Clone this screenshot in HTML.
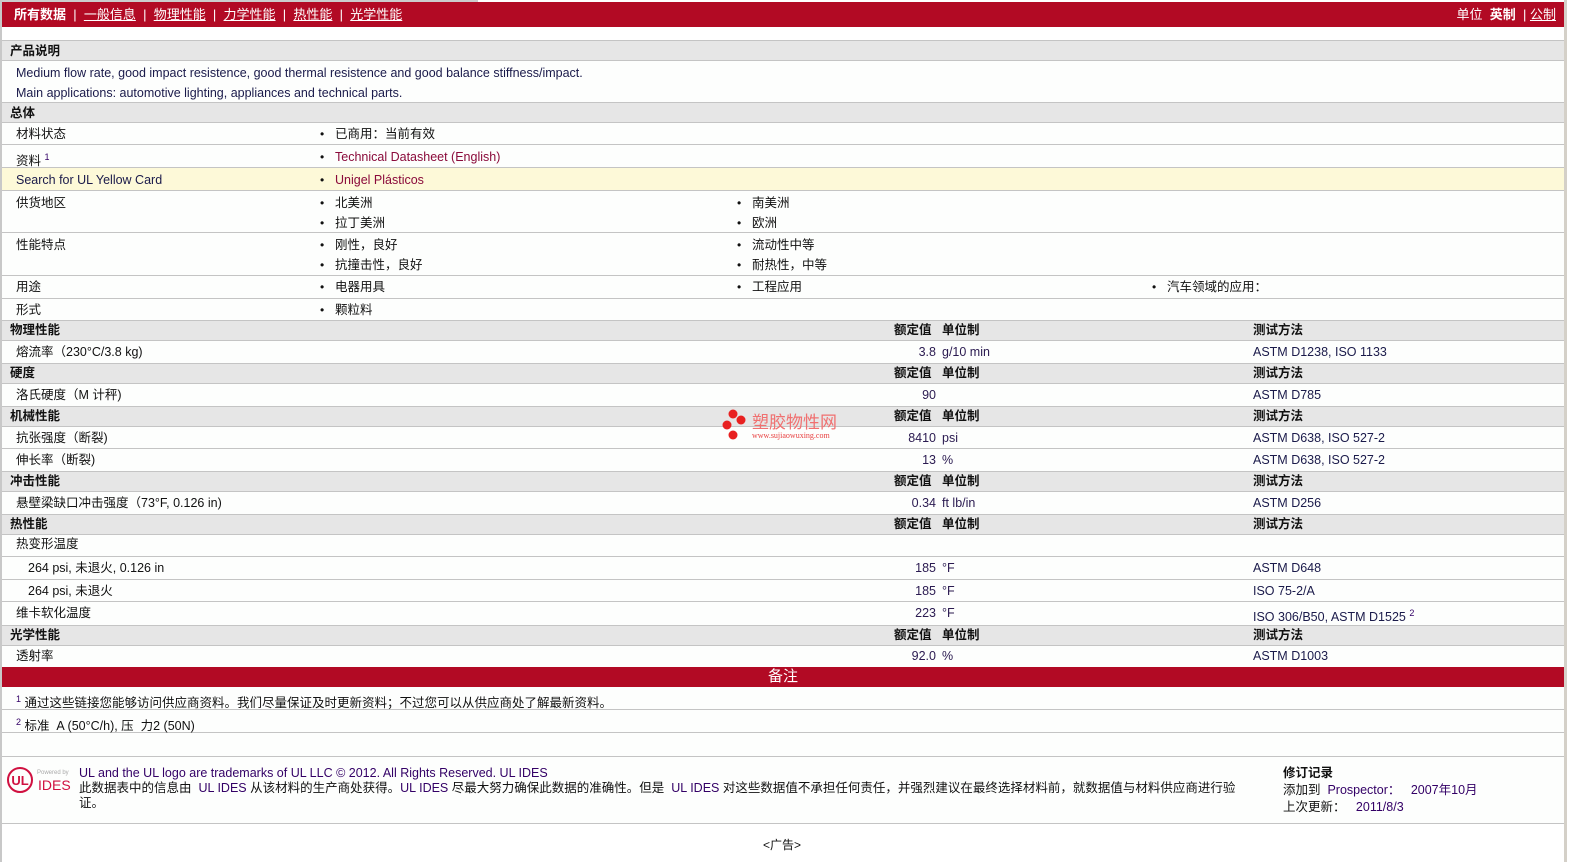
<!DOCTYPE html>
<html><head><meta charset="utf-8"><style>
*{margin:0;padding:0;box-sizing:border-box}
body{width:1586px;height:862px;background:#fff;font-family:"Liberation Sans","Noto Sans CJK SC",sans-serif;font-size:12.5px;color:#111;position:relative;overflow:hidden}
.r{position:absolute;left:2px;width:1562px;border-bottom:1px solid #c4c4c4;background:#fdfefd}
.s{background:#e6e6e6;font-weight:bold;border-top:1px solid #c4c4c4}
.r span{position:absolute;white-space:nowrap}
.l{left:14px}.sl{left:8px}
.b1{left:318px}.b2{left:735px}.b3{left:1150px}
.b1:before,.b2:before,.b3:before{content:"•";position:absolute;left:0;font-size:12px}
.b1 i,.b2 i,.b3 i{font-style:normal;padding-left:15px}
.v{right:628px;text-align:right;color:#2a1a50}
.u{left:940px;color:#2a1a50}
.h1{left:892px}.h2{left:940px}
.m{left:1251px;color:#1a1a4a}
.lk{color:#8a0a3a}
sup{font-size:9px;color:#330066}
#side{position:absolute;left:1564px;top:0;width:3px;height:862px;background:#d4d0c8}
</style></head><body>
<div style="position:absolute;left:2px;top:2px;width:1562px;height:25px;background:#b20a24;color:#fff;font-size:13px;line-height:25px">
<span style="position:absolute;left:12px"><b>所有数据</b> &nbsp;| &nbsp;<u>一般信息</u> &nbsp;| &nbsp;<u>物理性能</u> &nbsp;| &nbsp;<u>力学性能</u> &nbsp;| &nbsp;<u>热性能</u> &nbsp;| &nbsp;<u>光学性能</u></span>
<span style="position:absolute;right:8px">单位 &nbsp;<b>英制</b> &nbsp;| <u>公制</u></span></div>
<div style="position:absolute;left:2px;top:0;width:476px;height:2px;background:#ccc"></div>

<div class="r s" style="top:40px;height:21px;line-height:20px"><span class="sl">产品说明</span></div>
<div class="r" style="top:61px;height:41px;border:none"><span class="l" style="top:2px;line-height:20px;color:#1a1a4a">Medium flow rate, good impact resistence, good thermal resistence and good balance stiffness/impact.<br>Main applications: automotive lighting, appliances and technical parts.</span></div>
<div class="r s" style="top:102px;height:21px;line-height:20px"><span class="sl">总体</span></div>
<div class="r" style="top:123px;height:22px;line-height:22px"><span class="l">材料状态</span><span class="b1"><i>已商用：当前有效</i></span></div>
<div class="r" style="top:145px;height:23px;line-height:24px"><span class="l">资料 <sup>1</sup></span><span class="b1"><i class="lk">Technical Datasheet (English)</i></span></div>
<div class="r" style="top:168px;height:23px;line-height:24px;background:#fdf9d8"><span class="l" style="color:#1a1a4a">Search for UL Yellow Card</span><span class="b1"><i class="lk">Unigel Plásticos</i></span></div>
<div class="r" style="top:191px;height:42px;line-height:20px"><span class="l" style="top:2px">供货地区</span><span class="b1" style="top:2px"><i>北美洲</i></span><span class="b1" style="top:22px"><i>拉丁美洲</i></span><span class="b2" style="top:2px"><i>南美洲</i></span><span class="b2" style="top:22px"><i>欧洲</i></span></div>
<div class="r" style="top:233px;height:43px;line-height:20px"><span class="l" style="top:2px">性能特点</span><span class="b1" style="top:2px"><i>刚性，良好</i></span><span class="b1" style="top:22px"><i>抗撞击性，良好</i></span><span class="b2" style="top:2px"><i>流动性中等</i></span><span class="b2" style="top:22px"><i>耐热性，中等</i></span></div>
<div class="r" style="top:276px;height:23px;line-height:22px"><span class="l">用途</span><span class="b1"><i>电器用具</i></span><span class="b2"><i>工程应用</i></span><span class="b3"><i>汽车领域的应用：</i></span></div>
<div class="r" style="top:299px;height:22px;line-height:22px;border:none"><span class="l">形式</span><span class="b1"><i>颗粒料</i></span></div>

<div class="r s" style="top:320px;height:21px;line-height:19px"><span class="sl">物理性能</span><span class="h1">额定值</span><span class="h2">单位制</span><span class="m" style="color:#111">测试方法</span></div>
<div class="r" style="top:341px;height:22px;line-height:23px;border:none"><span class="l">熔流率（230°C/3.8 kg)</span><span class="v">3.8</span><span class="u">g/10 min</span><span class="m">ASTM D1238, ISO 1133</span></div>
<div class="r s" style="top:363px;height:21px;line-height:19px"><span class="sl">硬度</span><span class="h1">额定值</span><span class="h2">单位制</span><span class="m" style="color:#111">测试方法</span></div>
<div class="r" style="top:384px;height:22px;line-height:23px;border:none"><span class="l">洛氏硬度（M 计秤)</span><span class="v">90</span><span class="m">ASTM D785</span></div>
<div class="r s" style="top:406px;height:21px;line-height:19px"><span class="sl">机械性能</span><span class="h1">额定值</span><span class="h2">单位制</span><span class="m" style="color:#111">测试方法</span></div>
<div class="r" style="top:427px;height:22px;line-height:23px"><span class="l">抗张强度（断裂)</span><span class="v">8410</span><span class="u">psi</span><span class="m">ASTM D638, ISO 527-2</span></div>
<div class="r" style="top:449px;height:22px;line-height:23px;border:none"><span class="l">伸长率（断裂)</span><span class="v">13</span><span class="u">%</span><span class="m">ASTM D638, ISO 527-2</span></div>
<div class="r s" style="top:471px;height:21px;line-height:19px"><span class="sl">冲击性能</span><span class="h1">额定值</span><span class="h2">单位制</span><span class="m" style="color:#111">测试方法</span></div>
<div class="r" style="top:492px;height:22px;line-height:23px;border:none"><span class="l">悬壁梁缺口冲击强度（73°F, 0.126 in)</span><span class="v">0.34</span><span class="u">ft lb/in</span><span class="m">ASTM D256</span></div>
<div class="r s" style="top:514px;height:21px;line-height:19px"><span class="sl">热性能</span><span class="h1">额定值</span><span class="h2">单位制</span><span class="m" style="color:#111">测试方法</span></div>
<div class="r" style="top:535px;height:22px;line-height:19px"><span class="l">热变形温度</span></div>
<div class="r" style="top:557px;height:23px;line-height:23px"><span class="l" style="left:26px">264 psi, 未退火, 0.126 in</span><span class="v">185</span><span class="u">°F</span><span class="m">ASTM D648</span></div>
<div class="r" style="top:580px;height:22px;line-height:23px"><span class="l" style="left:26px">264 psi, 未退火</span><span class="v">185</span><span class="u">°F</span><span class="m">ISO 75-2/A</span></div>
<div class="r" style="top:602px;height:23px;line-height:23px;border:none"><span class="l">维卡软化温度</span><span class="v">223</span><span class="u">°F</span><span class="m">ISO 306/B50, ASTM D1525 <sup>2</sup></span></div>
<div class="r s" style="top:625px;height:21px;line-height:19px"><span class="sl">光学性能</span><span class="h1">额定值</span><span class="h2">单位制</span><span class="m" style="color:#111">测试方法</span></div>
<div class="r" style="top:646px;height:21px;line-height:21px;border:none"><span class="l">透射率</span><span class="v">92.0</span><span class="u">%</span><span class="m">ASTM D1003</span></div>
<div class="r" style="top:667px;height:20px;background:#b20a24;color:#fff;font-size:15px;line-height:20px;text-align:center;border:none">备注</div>
<div class="r" style="top:687px;height:23px;line-height:25px"><span class="l"><sup>1</sup> 通过这些链接您能够访问供应商资料。我们尽量保证及时更新资料；不过您可以从供应商处了解最新资料。</span></div>
<div class="r" style="top:710px;height:23px;line-height:25px"><span class="l"><sup>2</sup> 标准 &nbsp;A (50°C/h), 压 &nbsp;力2 (50N)</span></div>
<div class="r" style="top:733px;height:24px"></div>
<div class="r" style="top:757px;height:67px">
<svg style="position:absolute;left:5px;top:9px" width="64" height="30" viewBox="0 0 64 30"><circle cx="13" cy="14" r="12" fill="none" stroke="#d01040" stroke-width="2"/><text x="13" y="19" font-family="Liberation Sans" font-size="13" font-weight="bold" fill="#d01040" text-anchor="middle">UL</text><text x="30" y="8" font-family="Liberation Sans" font-size="6" fill="#aaa">Powered by</text><text x="31" y="24" font-family="Liberation Sans" font-size="14" fill="#d01040">IDES</text></svg>
<span style="left:77px;top:9px;line-height:15px;white-space:normal;width:1170px"><span style="position:static;color:#330066">UL and the UL logo are trademarks of UL LLC © 2012. All Rights Reserved. UL IDES</span><br>此数据表中的信息由 &nbsp;<span style="position:static;color:#330066">UL IDES</span> 从该材料的生产商处获得。<span style="position:static;color:#330066">UL IDES</span> 尽最大努力确保此数据的准确性。但是 &nbsp;<span style="position:static;color:#330066">UL IDES</span> 对这些数据值不承担任何责任，并强烈建议在最终选择材料前，就数据值与材料供应商进行验证。</span>
<span style="left:1281px;top:8px;line-height:17px"><b>修订记录</b><br>添加到 &nbsp;<span style="position:static;color:#330066">Prospector：</span> &nbsp;&nbsp;<span style="position:static;color:#330066">2007年10月</span><br>上次更新： &nbsp;&nbsp;<span style="position:static;color:#330066">2011/8/3</span></span>
</div>
<div style="position:absolute;left:0;top:836px;width:1564px;text-align:center;font-size:12px">&lt;广告&gt;</div>
<div style="position:absolute;left:0;top:0;width:2px;height:862px;background:#c8c8c8"></div>
<div id="side"></div>
<div style="position:absolute;left:722px;top:409px;width:130px;height:34px">
<svg width="30" height="32" style="position:absolute;left:0;top:0"><circle cx="11" cy="5" r="4.5" fill="#e82020"/><circle cx="19" cy="11" r="4.5" fill="#e82020"/><circle cx="5" cy="16" r="4.5" fill="#e82020"/><circle cx="11" cy="26" r="4.5" fill="#e82020"/></svg>
<span style="position:absolute;left:30px;top:3px;color:#f07070;font-size:17px;font-family:'Noto Sans CJK SC',sans-serif;line-height:18px">塑胶物性网</span>
<span style="position:absolute;left:30px;top:22px;color:#e84040;font-size:8px;font-family:'Liberation Serif',serif">www.sujiaowuxing.com</span>
</div>
</body></html>
